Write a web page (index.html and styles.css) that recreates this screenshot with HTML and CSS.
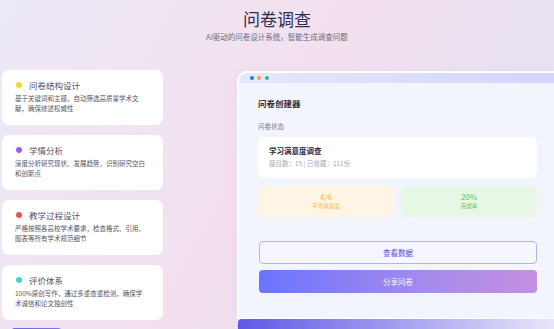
FILE: index.html
```html
<!DOCTYPE html>
<html lang="zh-CN">
<head>
    <meta charset="UTF-8">
    <meta name="viewport" content="width=device-width, initial-scale=1.0">
    <title>问卷调查</title>
    <link rel="stylesheet" href="styles.css">
</head>
<body>
    <div class="header">
        <h1>问卷调查</h1>
        <p>AI驱动的问卷设计系统，智能生成调查问题</p>
    </div>

    <div class="main">
        <!-- Feature list -->
        <div class="features">
            <div class="feature">
                <h3><span class="dot dot-yellow"></span>问卷结构设计</h3>
                <p>基于关键词和主题，自动筛选高质量学术文献，确保综述权威性</p>
            </div>
            <div class="feature">
                <h3><span class="dot dot-purple"></span>学情分析</h3>
                <p>深度分析研究现状、发展趋势，识别研究空白和创新点</p>
            </div>
            <div class="feature">
                <h3><span class="dot dot-red"></span>教学过程设计</h3>
                <p>严格按照各高校学术要求，检查格式、引用、图表等所有学术规范细节</p>
            </div>
            <div class="feature">
                <h3><span class="dot dot-teal"></span>评价体系</h3>
                <p>100%原创写作，通过多重查重检测，确保学术诚信和论文独创性</p>
            </div>
            <div class="start-btn"></div>
        </div>

        <!-- Preview window -->
        <div class="preview">
            <div class="window">
                <div class="window-bar">
                    <span class="wdot wdot-blue"></span>
                    <span class="wdot wdot-orange"></span>
                    <span class="wdot wdot-green"></span>
                </div>
                <div class="window-body">
                    <h2>问卷创建器</h2>
                    <div class="status-label">问卷状态</div>
                    <div class="survey-card">
                        <h4>学习满意度调查</h4>
                        <div class="survey-meta">题目数：15 | 已收藏：111份</div>
                    </div>
                    <div class="stats">
                        <div class="stat stat-orange">
                            <div class="stat-value">4/6</div>
                            <div class="stat-label">平均满意度</div>
                        </div>
                        <div class="stat stat-green">
                            <div class="stat-value">20%</div>
                            <div class="stat-label">完成率</div>
                        </div>
                    </div>
                    <button class="btn btn-outline">查看数据</button>
                    <button class="btn btn-primary">分享问卷</button>
                </div>
            </div>
            <div class="window-footer"></div>
        </div>
    </div>
</body>
</html>
```

FILE: styles.css
```css
* {
    margin: 0;
    padding: 0;
    box-sizing: border-box;
}

body {
    font-family: "Noto Sans CJK SC", "Noto Sans", sans-serif;
    background: linear-gradient(120deg, #ede9f7 0%, #f3e0ee 48%, #dfe3f6 100%);
    height: 329px;
    overflow: hidden;
}

.header {
    text-align: center;
    padding-top: 8px;
}

.header h1 {
    font-size: 17px;
    line-height: 22px;
    font-weight: 400;
    color: #2e2e48;
    margin-bottom: 1.5px;
}

.header p {
    font-size: 7.5px;
    line-height: 10px;
    color: #6a6a78;
}

.main {
    display: flex;
    gap: 74px;
    padding-left: 2px;
    margin-top: 28.5px;
}

.features {
    width: 161px;
    flex-shrink: 0;
    display: flex;
    flex-direction: column;
    gap: 10px;
}

.feature {
    background: white;
    border-radius: 7px;
    padding: 9px 15px 11px 13px;
    height: 55px;
}

.feature h3 {
    display: flex;
    align-items: center;
    gap: 7px;
    font-size: 8.5px;
    line-height: 12px;
    font-weight: 400;
    color: #525268;
    margin-bottom: 3px;
    padding-left: 1px;
}

.feature p {
    font-size: 6.5px;
    line-height: 9.5px;
    color: #55555f;
}

.dot {
    width: 6px;
    height: 6px;
    border-radius: 50%;
    display: inline-block;
}

.dot-yellow { background: #f8d91e; }
.dot-purple { background: #9d5cf0; }
.dot-red { background: #f4505a; }
.dot-teal { background: #3fd5c0; }

.start-btn {
    margin: -2px 0 0 8px;
    width: 53px;
    height: 20px;
    border-radius: 5px;
    background: linear-gradient(90deg, #6c63ee, #8a70ee);
}

.preview {
    width: 319px;
    flex-shrink: 0;
    margin-top: 1px;
}

.window {
    background: #f3f5fe;
    border: 2px solid rgba(255, 255, 255, 0.95);
    border-right: none;
    border-bottom-width: 1px;
    border-radius: 10px 0 0 0;
    box-shadow: 0 4px 14px rgba(120, 110, 200, 0.08);
    overflow: hidden;
}

.window-bar {
    height: 10px;
    background: linear-gradient(90deg, #e6e8fb, #d3d3fb);
    display: flex;
    align-items: center;
    gap: 3.7px;
    padding-left: 10.7px;
}

.wdot {
    width: 4px;
    height: 4px;
    border-radius: 50%;
}

.wdot-blue { background: #1a7cf5; }
.wdot-orange { background: #f7a23b; }
.wdot-green { background: #1fc48a; }

.window-body {
    padding: 13.5px 19px 25px 19px;
}

.window-body h2 {
    font-size: 8.5px;
    line-height: 12px;
    font-weight: 700;
    color: #2b2b3b;
    margin-bottom: 13px;
}

.status-label {
    font-size: 6.5px;
    line-height: 9px;
    color: #7a7a86;
    margin-bottom: 6px;
}

.survey-card {
    background: white;
    border-radius: 6px;
    padding: 9px 11px 10px;
    height: 41px;
}

.survey-card h4 {
    font-size: 7.5px;
    line-height: 10px;
    font-weight: 700;
    color: #2b2b3b;
    margin-bottom: 3px;
}

.survey-meta {
    font-size: 6.5px;
    line-height: 9px;
    color: #a8a8b2;
}

.stats {
    display: flex;
    gap: 7px;
    margin-top: 8px;
    margin-bottom: 24px;
}

.stat {
    flex: 1;
    height: 31px;
    border-radius: 5px;
    text-align: center;
    padding-top: 5px;
}

.stat-value {
    font-size: 8px;
    line-height: 11px;
}

.stat-label {
    font-size: 5.5px;
    line-height: 8px;
}

.stat-orange {
    background: #fff5e4;
    color: #f4b43d;
}

.stat-green {
    background: #e8f6e5;
    color: #67c250;
}

.btn {
    display: block;
    width: 278px;
    height: 23px;
    margin-left: 1px;
    border-radius: 4px;
    font-family: inherit;
    font-size: 7.5px;
}

.btn-outline {
    background: #f5f6ff;
    border: 1.2px solid #b6b1f2;
    color: #6c69d6;
    font-weight: 500;
    margin-bottom: 6.5px;
}

.btn-primary {
    border: none;
    background: linear-gradient(90deg, #6a74fe 0%, #a58bec 60%, #c590e2 100%);
    color: #f6f0ff;
}

.window-footer {
    height: 14px;
    margin-left: 1px;
    border-radius: 4px 0 0 0;
    background: linear-gradient(90deg, #6158e6 0%, #9c97ee 45%, #e9e7fb 100%);
}
```
